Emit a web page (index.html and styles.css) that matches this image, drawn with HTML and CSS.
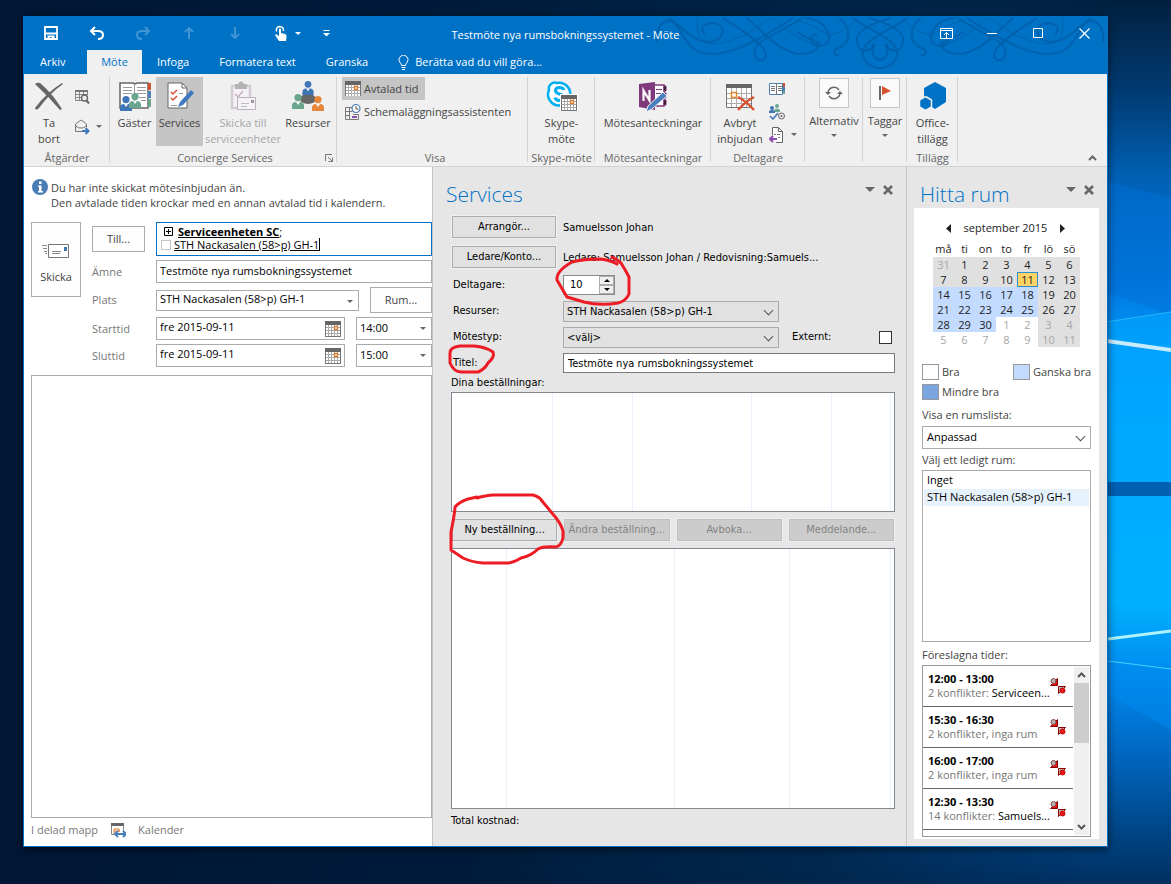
FILE: index.html
```html
<!DOCTYPE html>
<html lang="sv">
<head>
    <meta charset="UTF-8">
    <meta name="viewport" content="width=device-width, initial-scale=1.0">
    <title>Testmöte nya rumsbokningssystemet - Möte</title>
    <link rel="stylesheet" href="styles.css">
</head>
<body>
    <!-- shared icons -->
    <svg class="defs" width="0" height="0">
        <symbol id="icon-calendar" viewBox="0 0 16 16">
            <rect x="0.5" y="1.5" width="15" height="14" fill="#fff" stroke="#777"/>
            <rect y="0" width="16" height="4" fill="#666"/>
            <path d="M3.5 4v11M6.5 4v11M9.5 4v11M12.5 4v11M1 6.5h14M1 9.5h14M1 12.5h14" stroke="#aaa"/>
            <rect x="9.5" y="5.5" width="3" height="3" fill="#fff" stroke="#e07a2c" stroke-width="1.4"/>
        </symbol>
        <symbol id="icon-conflict" viewBox="0 0 16 16">
            <path d="M7.5.5v7h-7z" fill="#e81010" stroke="#800"/>
            <circle cx="3.500" cy="3" r="2.500" fill="#b4b4b4" stroke="#844"/>
            <path d="M8.500 8.500h7l-7 7z" fill="#bbb" stroke="#800"/>
            <circle cx="12.500" cy="12.500" r="2.500" fill="#f01818" stroke="#b00"/>
        </symbol>
        <symbol id="icon-person" viewBox="0 0 12 15">
            <circle cx="6" cy="3.6" r="3.6"/>
            <path d="M0 15v-3q0-4 4-4h4q4 0 4 4v3z"/>
            <path d="M4 8l2 3 2-3z" fill="#fff"/>
        </symbol>
    </svg>

    <svg class="wallpaper" viewBox="0 0 1171 884" preserveAspectRatio="none">
        <defs>
            <linearGradient id="sky" x1="0" y1="0" x2="0" y2="1">
                <stop offset="0" stop-color="#01203f"/>
                <stop offset="0.1" stop-color="#013a70"/>
                <stop offset="0.2" stop-color="#0060b4"/>
                <stop offset="0.32" stop-color="#0078e0"/>
                <stop offset="0.4" stop-color="#009bff"/>
                <stop offset="0.5" stop-color="#00a8ff"/>
                <stop offset="0.68" stop-color="#00b0ff"/>
                <stop offset="0.77" stop-color="#0088ee"/>
                <stop offset="0.86" stop-color="#0064bd"/>
                <stop offset="0.95" stop-color="#00427f"/>
                <stop offset="1" stop-color="#002f60"/>
            </linearGradient>
            <linearGradient id="shade" x1="0" y1="0" x2="1" y2="0">
                <stop offset="0" stop-color="#001735"/>
                <stop offset="0.4" stop-color="#001b3a"/>
                <stop offset="0.7" stop-color="#002347" stop-opacity="0.8"/>
                <stop offset="0.94" stop-color="#002a55" stop-opacity="0"/>
            </linearGradient>
        </defs>
        <rect width="1171" height="884" fill="url(#sky)"/>
        <path d="M1100 180L1171 198V315L1100 290z" fill="#006fd6" opacity="0.5"/>
        <path d="M1100 322L1171 312V482H1100z" fill="#00aaff" opacity="0.5"/>
        <rect x="1100" y="482" width="71" height="14" fill="#0060b2"/>
        <path d="M1100 340L1171 350" stroke="#c8ecff" stroke-width="4"/>
        <path d="M1100 640L1171 631" stroke="#aef2ff" stroke-width="3"/>
        <path d="M1100 323L1171 312" stroke="#28b6f8"/>
        <path d="M1100 660L1171 669" stroke="#46cffb"/>
        <path d="M1100 662L1171 672V730L1100 690z" fill="#008aee" opacity="0.5"/>
        <rect width="1171" height="884" fill="url(#shade)"/>
    </svg>

    <div class="window">
        <header class="titlebar">
            <svg class="ornament" width="450" height="58" viewBox="0 0 450 58">
                <g id="swirl" fill="none" stroke="#0062ad" stroke-width="2">
                    <path d="M2 26C0 10 10 2 18 6C28 12 30 40 60 38C84 36 110 20 138 2"/>
                    <path d="M14 2C30 14 40 27 56 26C70 24 72 8 58 7C48 7 44 14 50 18"/>
                    <path d="M42 2C42 22 46 28 60 28C84 26 104 10 116 2" stroke-width="1"/>
                    <path d="M68 2C86 14 100 22 106 30C118 42 105 48 101 42C96 34 104 26 112 22L148 2"/>
                    <path d="M92 2C108 16 126 37 145 38C156 38 164 34 164 27C160 24 150 22 142 16"/>
                    <path d="M118 2C134 18 152 28 166 28" stroke-width="1"/>
                    <path d="M150 2C162 2 176 12 174 24C172 30 162 32 157 27C154 20 160 16 162 20"/>
                    <path d="M142 5C160 8 166 18 178 18C190 16 196 8 204 2" stroke-width="1"/>
                    <path d="M184 2C196 10 196 26 186 31C176 34 178 42 184 38"/>
                    <path d="M236 2C214 8 200 16 202 26C204 36 210 36 218 32C222 26 216 28 217 32C218 42 222 44 225 44"/>
                    <path d="M198 2C216 16 240 22 242 36"/>
                    <path d="M208 36C207 46 216 52 225 52"/>
                </g>
                <use href="#swirl" transform="matrix(-1 0 0 1 450 0)"/>
            </svg>
            <div class="quick-access">
                <button aria-label="Spara"><svg width="14" height="14" viewBox="0 0 14 14"><path d="M1 1h12v12H1zM1 7.500h12" fill="none" stroke="#fff" stroke-width="1.800"/><path d="M3.500 13V9.500h7V13h-3v-2H6v2z" fill="#fff"/></svg></button>
                <button aria-label="Ångra"><svg width="16" height="14" viewBox="0 0 16 14"><path d="M6 1L2 5l4 4M2 5h7q5 0 5 4t-5 4" fill="none" stroke="#fff" stroke-width="2"/></svg></button>
                <button class="dim" aria-label="Gör om"><svg width="16" height="14" viewBox="0 0 16 14"><path d="M10 1l4 4-4 4M14 5H7Q2 5 2 9t5 4" fill="none" stroke="#fff" stroke-width="2"/></svg></button>
                <button class="dim" aria-label="Föregående"><svg width="10" height="12" viewBox="0 0 10 12"><path d="M5 12V1M1 5l4-4 4 4" fill="none" stroke="#fff" stroke-width="2"/></svg></button>
                <button class="dim" aria-label="Nästa"><svg width="10" height="12" viewBox="0 0 10 12"><path d="M5 0v11M1 7l4 4 4-4" fill="none" stroke="#fff" stroke-width="2"/></svg></button>
                <button aria-label="Pekläge"><svg width="12" height="16" viewBox="0 0 12 16"><path d="M1.600 6.500A3.600 3.600 0 1 1 8.400 6" fill="none" stroke="#fff" stroke-width="1.500"/><path d="M4 4q1-1.500 2 0v4l4 1q2 .5 1.500 3L11 16H4L0 10q1-1.500 3 .5l1 1z" fill="#fff"/></svg></button>
                <span class="arrow light"></span>
                <button class="customize" aria-label="Anpassa verktygsfältet"><svg width="7" height="7" viewBox="0 0 7 7"><path d="M0.500 0.500h6" stroke="#fff"/><path d="M0 3h7L3.500 6.500z" fill="#fff"/></svg></button>
            </div>
            <h1>Testmöte nya rumsbokningssystemet - Möte</h1>
            <div class="window-controls">
                <button aria-label="Menyfliksalternativ"><svg width="13" height="11" viewBox="0 0 13 11"><path d="M.5.5h12v10H.5zM.5 2.500h12M6.500 10V4.500M4 7l2.500-2.500L9 7" fill="none" stroke="#fff"/></svg></button>
                <button aria-label="Minimera"><svg width="10" height="11" viewBox="0 0 10 11"><path d="M0 5.500h10" stroke="#fff"/></svg></button>
                <button aria-label="Maximera"><svg width="10" height="10" viewBox="0 0 10 10"><path d="M.5.5h9v9h-9z" fill="none" stroke="#fff"/></svg></button>
                <button aria-label="Stäng"><svg width="11" height="11" viewBox="0 0 11 11"><path d="M.5.5l10 10M10.500.5l-10 10" stroke="#fff" stroke-width="1.200"/></svg></button>
            </div>
        </header>

        <nav class="tabs">
            <button class="tab file">Arkiv</button>
            <button class="tab active">Möte</button>
            <button class="tab">Infoga</button>
            <button class="tab">Formatera text</button>
            <button class="tab">Granska</button>
            <button class="tab tell-me">
                <svg width="11" height="15" viewBox="0 0 11 15"><path d="M3.500 10.500Q3.500 9 2 7.500A4.500 4.500 0 1 1 9 7.500Q7.500 9 7.500 10.500zM3.500 12.500h4M4 14.500h3" fill="none" stroke="#fff"/></svg>
                Berätta vad du vill göra...
            </button>
        </nav>

        <div class="ribbon">
            <section class="group actions">
                <div class="group-body">
                    <button class="big">
                        <svg width="30" height="30" viewBox="0 0 30 30"><path d="M1 3Q3 1 6 2Q18 12 28 28L26 29Q14 15 1 3zM28 2L29 3Q16 12 5 27Q2 30 1 27Q12 12 28 2z" fill="#666"/></svg>
                        <span>Ta<br>bort</span>
                    </button>
                    <div class="small-icons wide">
                        <button aria-label="Kalender"><svg width="16" height="16" viewBox="0 0 16 16"><path d="M8 11.500H1.500v-10h12V6M1 5.500h12M5.500 3v9M9.500 3v3M1 8.500h7" fill="none" stroke="#888"/><path d="M1 1h13v2H1z" fill="#777"/><circle cx="10.500" cy="9" r="3" fill="#f0f0f0" stroke="#666" stroke-width="1.300"/><path d="M12.500 11.500L15 14.500" stroke="#666" stroke-width="2"/></svg></button>
                        <button aria-label="Vidarebefordra"><svg width="16" height="16" viewBox="0 0 16 16"><path d="M8 12.500H1.500V5L7 1l5.500 4v3M1.500 5q0 4 5.500 4t5.500-4" fill="none" stroke="#777"/><path d="M8 12h6M11.500 9l3 3-3 3" fill="none" stroke="#3c78b8" stroke-width="2"/></svg><span class="arrow"></span></button>
                    </div>
                </div>
                <h2>Åtgärder</h2>
            </section>

            <section class="group concierge">
                <div class="group-body">
                    <button class="big guests">
                        <svg width="32" height="30" viewBox="0 0 32 30"><path d="M1 2h13l2 1 2-1h11v25H1z" fill="#fff" stroke="#666" stroke-width="1.500"/><path d="M15.500 3v24M4 6.500h9M4 9.500h9M4 12.500h9M18 6.500h9M18 9.500h9M18 12.500h9M20 16.500h7M22 19.500h5" stroke="#999"/><path d="M29 2h3v7h-3z" fill="#d35230"/><path d="M29 10h3v7h-3z" fill="#4a7fb8"/><path d="M29 18h3v8h-3z" fill="#6aa58e"/><use href="#icon-person" x="1" y="15" width="12" height="15" fill="#3f75b5"/><use href="#icon-person" x="10" y="12" width="12" height="15" fill="#6aa58e"/></svg>
                        <span>Gäster</span>
                    </button>
                    <button class="big services selected">
                        <svg width="28" height="30" viewBox="0 0 28 30"><path d="M2 2h14l5 5v20H2z" fill="#fff" stroke="#666"/><path d="M16 2v5h5" fill="none" stroke="#666"/><path d="M5 11l2 2 4-4M5 17l2 2 4-4" fill="none" stroke="#d35230" stroke-width="1.500"/><path d="M5 24.500h6M13 12.500h4" stroke="#999"/><path d="M12 26l2-5L25 9l3 3L17 24z" fill="#3f7ac0"/></svg>
                        <span>Services</span>
                    </button>
                    <button class="big send" disabled>
                        <svg width="28" height="30" viewBox="0 0 28 30"><path d="M3 5h18v22H3z" fill="#f4f0f5" stroke="#d3ccd6" stroke-width="2.500"/><path d="M6 3h12v5H6z" fill="#b4b4b4"/><circle cx="12" cy="3" r="2.500" fill="#b4b4b4"/><path d="M6 13l3 3 5-6" fill="none" stroke="#c9b0c4" stroke-width="1.500"/><path d="M8.500 16.500h18v12h-18z" fill="#f6f3f7" stroke="#b9b2bc"/><path d="M12 22.500h8M12 25.500h6" stroke="#bbb"/><path d="M22 19h3v3h-3z" fill="#999"/></svg>
                        <span>Skicka till<br>serviceenheter</span>
                    </button>
                    <button class="big">
                        <svg width="32" height="30" viewBox="0 0 32 30"><ellipse cx="16" cy="18" rx="8" ry="5" fill="#666"/><use href="#icon-person" x="10" y="0" width="12" height="14" fill="#3f75b5"/><use href="#icon-person" x="0" y="13" width="12" height="15" fill="#6aa58e"/><use href="#icon-person" x="20" y="15" width="12" height="15" fill="#e5863a"/></svg>
                        <span>Resurser</span>
                    </button>
                </div>
                <h2>Concierge Services</h2>
                <svg class="launcher" width="8" height="8" viewBox="0 0 8 8"><path d="M.5 7V.5H7M3 3l4 4M7.500 3.500v4h-4" fill="none" stroke="#777"/></svg>
            </section>

            <section class="group show">
                <div class="group-body column">
                    <button class="row-button selected"><svg width="16" height="15"><use href="#icon-calendar" width="16" height="16"/></svg>Avtalad tid</button>
                    <button class="row-button"><svg width="16" height="16" viewBox="0 0 16 16"><path d="M.5 3.500h7M.5 3.500v12h4v-12M4.500 7.500h3M.5 7.500h4M.5 11.500h4M8 10.500h5.500v5H5" fill="none" stroke="#777"/><path d="M7 12h5v2H7z" fill="#8a52ad"/><circle cx="11" cy="4.500" r="4" fill="#fff" stroke="#4a7fb8" stroke-width="1.200"/><path d="M11 2v3h2.500" fill="none" stroke="#555"/></svg>Schemaläggningsassistenten</button>
                </div>
                <h2>Visa</h2>
            </section>

            <section class="group skype">
                <div class="group-body">
                    <button class="big">
                        <svg width="32" height="30" viewBox="0 0 32 30"><path d="M3 9A6 6 0 0 1 11 2A11 11 0 0 1 24 15A6 6 0 0 1 16 24A11 11 0 0 1 3 9z" fill="#fff" stroke="#00aff0" stroke-width="2.500"/><path d="M18 9Q17 6.500 13.500 6.500Q9.500 6.500 9.500 9.500Q9.500 12 13.500 13Q18 14 18 16.500Q17.500 19.500 13.500 19.500Q9.500 19.500 9 16.500" fill="none" stroke="#00aff0" stroke-width="3"/><path d="M14 13h18v17H14z" fill="#fff"/><use href="#icon-calendar" x="15" y="14" width="16" height="16"/></svg>
                        <span>Skype-<br>möte</span>
                    </button>
                </div>
                <h2>Skype-möte</h2>
            </section>

            <section class="group notes">
                <div class="group-body">
                    <button class="big">
                        <svg width="30" height="30" viewBox="0 0 30 30"><path d="M16 4h10v21H16z" fill="#fff" stroke="#80397b" stroke-width="1.500"/><path d="M18 8.500h6M18 12.500h6M26 5h2v5h-2zM26 12h2v5h-2zM26 19h2v5h-2z" stroke="#80397b"/><path d="M1 3l16-2v28L1 26z" fill="#80397b"/><path d="M5.500 20V9.500l6 10V9" fill="none" stroke="#fff" stroke-width="2.200"/><path d="M8 31l2-6L25 11l4 4L14 28z" fill="#4a80bd" stroke="#f0f0f0"/></svg>
                        <span>Mötesanteckningar</span>
                    </button>
                </div>
                <h2>Mötesanteckningar</h2>
            </section>

            <section class="group attendees">
                <div class="group-body">
                    <button class="big">
                        <svg width="30" height="30" viewBox="0 0 30 30"><path d="M1.500 3.500h25v23h-25z" fill="#fff" stroke="#777"/><path d="M6.500 7v19M11.500 7v19M16.500 7v19M21.500 7v19M2 12.500h24M2 17.500h24M2 22.500h24" stroke="#aaa"/><path d="M1 3h26v4H1z" fill="#666"/><path d="M6.500 11.500h5v5h-5z" fill="#fff" stroke="#e8862e" stroke-width="1.500"/><path d="M13 16q8 4 16 13M29 16q-9 5-16 13" fill="none" stroke="#d8512f" stroke-width="2.500"/></svg>
                        <span>Avbryt<br>inbjudan</span>
                    </button>
                    <div class="small-icons">
                        <button aria-label="Adressbok"><svg width="16" height="14" viewBox="0 0 16 14"><path d="M.5 1.500h13v11H.5z" fill="#fff" stroke="#4a7fb8"/><path d="M7.500 1v12M2 4.500h4M2 6.500h4M2 8.500h4M9 4.500h4M9 6.500h4M9 8.500h4" stroke="#777"/><path d="M14 1h2v4h-2z" fill="#d35230"/><path d="M14 5h2v4h-2z" fill="#4a7fb8"/><path d="M14 9h2v3h-2z" fill="#6aa58e"/></svg></button>
                        <button aria-label="Kontrollera namn"><svg width="16" height="16" viewBox="0 0 16 16"><circle cx="8" cy="2" r="2" fill="#6aa58e"/><path d="M5 8V6q3-3 6 0v2z" fill="#6aa58e"/><circle cx="3" cy="4" r="2" fill="#3f75b5"/><path d="M0 9V7q3-2 6 0v2z" fill="#3f75b5"/><path d="M1 12l3 3 5-6" fill="none" stroke="#3f75b5" stroke-width="1.500"/><circle cx="12.500" cy="12" r="3" fill="none" stroke="#666"/><circle cx="12.500" cy="12" r="1" fill="#666"/></svg></button>
                        <button aria-label="Svarsalternativ"><svg width="16" height="16" viewBox="0 0 16 16"><path d="M3.500 8V.5h6l4 4v11H7M9.500.5v4h4" fill="#fff" stroke="#666"/><path d="M5 7.500h2M8 7.500h3M9 10.500h2" stroke="#777"/><path d="M8 12H1M4 9l-3 3 3 3" fill="none" stroke="#8a4fb0" stroke-width="2"/></svg><span class="arrow"></span></button>
                    </div>
                </div>
                <h2>Deltagare</h2>
            </section>

            <section class="group options">
                <div class="group-body">
                    <button class="boxed">
                        <span class="frame"><svg width="18" height="16" viewBox="0 0 18 16"><path d="M3 8a6 6 0 0 1 11-3M15 8a6 6 0 0 1-11 3" fill="none" stroke="#666" stroke-width="1.500"/><path d="M0 7h6L3 10zM12 9h6l-3-3z" fill="#666"/></svg></span>
                        <span>Alternativ</span>
                        <span class="arrow"></span>
                    </button>
                </div>
            </section>

            <section class="group tags">
                <div class="group-body">
                    <button class="boxed">
                        <span class="frame"><svg width="14" height="16" viewBox="0 0 14 16"><path d="M2 1v14" stroke="#666" stroke-width="2"/><path d="M4 1l9 5-9 4z" fill="#d8512f"/></svg></span>
                        <span>Taggar</span>
                        <span class="arrow"></span>
                    </button>
                </div>
            </section>

            <section class="group addins">
                <div class="group-body">
                    <button class="big">
                        <svg width="28" height="30" viewBox="0 0 28 30"><path d="M16 1l11 6v14l-11 7-11-7V7z" fill="#0072c6"/><path d="M6.500 15.500l6 3.500v7l-6 3.500-6-3.500v-7z" fill="#0072c6" stroke="#f0f0f0" stroke-width="1.500"/></svg>
                        <span>Office-<br>tillägg</span>
                    </button>
                </div>
                <h2>Tillägg</h2>
            </section>

            <button class="collapse" aria-label="Dölj menyfliksområdet"><svg width="9" height="6" viewBox="0 0 9 6"><path d="M1 5l3.500-3.500L8 5" fill="none" stroke="#666" stroke-width="2"/></svg></button>
        </div>

        <div class="panes">
            <main class="meeting">
                <div class="info">
                    <svg width="16" height="16" viewBox="0 0 16 16"><circle cx="8" cy="8" r="8" fill="#4a7db5"/><path d="M7 2.500h2.500V5H7zM6 6.500h3.500V12H11v1.500H6V12h1V8H6z" fill="#fff"/></svg>
                    <p>Du har inte skickat mötesinbjudan än.<br>Den avtalade tiden krockar med en annan avtalad tid i kalendern.</p>
                </div>

                <form class="meeting-form">
                    <button type="button" class="send-button">
                        <svg width="28" height="16" viewBox="0 0 28 16"><path d="M6.500 1.500h20v13h-20z" fill="#fff" stroke="#777"/><path d="M22 4h3v4h-3z" fill="#3f75b5"/><path d="M10 8.500h9M10 10.500h8M0 2.500h5M1 5.500h4M2 8.500h3M3 10.500h2" stroke="#888"/></svg>
                        Skicka
                    </button>
                    <button type="button" class="to-button">Till...</button>
                    <div class="to-field" role="textbox" aria-label="Till">
                        <div><svg width="9" height="9" viewBox="0 0 9 9"><path d="M.5.5h8v8h-8zM2 4.500h5M4.500 2v5" fill="none" stroke="#000"/></svg><b>Serviceenheten SC</b>;</div>
                        <div class="second"><i></i><u>STH Nackasalen (58&gt;p) GH-1</u></div>
                    </div>

                    <label for="subject">Ämne</label>
                    <input id="subject" type="text" value="Testmöte nya rumsbokningssystemet">

                    <label for="place">Plats</label>
                    <div class="split">
                        <div class="select place"><select id="place"><option>STH Nackasalen (58&gt;p) GH-1</option></select></div>
                        <button type="button" class="room-button">Rum...</button>
                    </div>

                    <label for="start">Starttid</label>
                    <div class="split">
                        <div class="date"><input id="start" type="text" value="fre 2015-09-11"><svg width="16" height="16"><use href="#icon-calendar" width="16" height="16"/></svg></div>
                        <div class="select time"><select aria-label="Startklockslag"><option>14:00</option></select></div>
                    </div>

                    <label for="end">Sluttid</label>
                    <div class="split">
                        <div class="date"><input id="end" type="text" value="fre 2015-09-11"><svg width="16" height="16"><use href="#icon-calendar" width="16" height="16"/></svg></div>
                        <div class="select time"><select aria-label="Slutklockslag"><option>15:00</option></select></div>
                    </div>
                </form>

                <textarea class="message" aria-label="Meddelande"></textarea>

                <footer>
                    <span>I delad mapp</span>
                    <svg width="16" height="16" viewBox="0 0 16 16"><path d="M1.500 2.500h12v10h-12z" fill="#fff" stroke="#888"/><path d="M1 1h13v3H1z" fill="#666"/><path d="M4 12V7h5v3M4 9h6" fill="none" stroke="#e07a2c"/><path d="M5 12h11M8 9l-3 3 3 3M13 9l3 3-3 3" fill="none" stroke="#4a80bd" stroke-width="2"/></svg>
                    <span>Kalender</span>
                </footer>
            </main>

            <section class="services-pane">
                <div class="pane-head">
                    <h2>Services</h2>
                    <button aria-label="Alternativ"><span class="arrow large"></span></button>
                    <button aria-label="Stäng"><svg width="10" height="10" viewBox="0 0 10 10"><path d="M1 1l8 8M9 1L1 9" stroke="#666" stroke-width="2.500"/></svg></button>
                </div>

                <form class="services-form">
                    <button type="button" class="win-button">Arrangör...</button>
                    <span>Samuelsson Johan</span>
                    <button type="button" class="win-button">Ledare/Konto...</button>
                    <span>Ledare: Samuelsson Johan / Redovisning:Samuels...</span>
                    <label for="attendees">Deltagare:</label>
                    <div class="spinner">
                        <input id="attendees" type="text" value="10">
                        <button type="button" aria-label="Öka"><i class="arrow up"></i></button>
                        <button type="button" aria-label="Minska"><i class="arrow down"></i></button>
                    </div>
                    <label for="resource">Resurser:</label>
                    <div class="select gray"><select id="resource"><option>STH Nackasalen (58&gt;p) GH-1</option></select></div>
                    <label for="type">Mötestyp:</label>
                    <div class="type-row">
                        <div class="select gray"><select id="type"><option>&lt;välj&gt;</option></select></div>
                        <label for="external">Externt:</label>
                        <input id="external" type="checkbox">
                    </div>
                    <label for="title">Titel:</label>
                    <input id="title" class="title-input" type="text" value="Testmöte nya rumsbokningssystemet">
                </form>

                <p class="list-label">Dina beställningar:</p>
                <div class="columns orders"><i></i><i></i><i></i><i></i><i></i></div>
                <div class="order-buttons">
                    <button class="win-button">Ny beställning...</button>
                    <button class="win-button" disabled>Ändra beställning...</button>
                    <button class="win-button" disabled>Avboka...</button>
                    <button class="win-button" disabled>Meddelande...</button>
                </div>
                <div class="columns details"><i></i><i></i><i></i><i></i></div>
                <p class="total">Total kostnad:</p>

                <svg class="marks" width="474" height="420" viewBox="0 0 474 420">
                    <path d="M179 90L184 93L188 96Q193 104 196 110V127Q193 134 185 136Q167 139 151 135L134 130Q128 120 124 113Q123 104 139 95Q150 92 168 92Q180 94 184 97"/>
                    <path d="M41 179H27Q17 180 17 186V196Q21 205 28 205H45Q52 202 55 196Q62 190 60 185Q53 180 41 179"/>
                    <path d="M44 331Q50 329 60 328H100Q107 330 109 334L119 346Q128 356 130 364V371Q128 379 123 380Q110 379 105 382Q98 389 88 391Q80 396 74 396H50Q38 395 30 391L18 383V365Q22 345 22 340Q26 335 35 332L44 330"/>
                </svg>
            </section>

            <aside class="room-pane">
                <div class="pane-head">
                    <h2>Hitta rum</h2>
                    <button aria-label="Alternativ"><span class="arrow large"></span></button>
                    <button aria-label="Stäng"><svg width="10" height="10" viewBox="0 0 10 10"><path d="M1 1l8 8M9 1L1 9" stroke="#666" stroke-width="2.500"/></svg></button>
                </div>

                <div class="room-box">
                    <div class="month">
                        <button aria-label="Föregående månad"><svg width="5" height="9" viewBox="0 0 5 9"><path d="M5 0v9L0 4.500z" fill="#222"/></svg></button>
                        <span>september 2015</span>
                        <button aria-label="Nästa månad"><svg width="5" height="9" viewBox="0 0 5 9"><path d="M0 0v9l5-4.500z" fill="#222"/></svg></button>
                    </div>
                    <table class="calendar">
                        <thead>
                            <tr><th>må</th><th>ti</th><th>on</th><th>to</th><th>fr</th><th>lö</th><th>sö</th></tr>
                        </thead>
                        <tbody>
                            <tr><td class="past other">31</td><td class="past">1</td><td class="past">2</td><td class="past">3</td><td class="past">4</td><td class="past">5</td><td class="past">6</td></tr>
                            <tr><td class="past">7</td><td class="past">8</td><td class="past">9</td><td class="past">10</td><td class="today">11</td><td class="past">12</td><td class="past">13</td></tr>
                            <tr><td class="fair">14</td><td class="fair">15</td><td class="fair">16</td><td class="fair">17</td><td class="fair">18</td><td class="past">19</td><td class="past">20</td></tr>
                            <tr><td class="fair">21</td><td class="fair">22</td><td class="fair">23</td><td class="fair">24</td><td class="fair">25</td><td class="past">26</td><td class="past">27</td></tr>
                            <tr><td class="fair">28</td><td class="fair">29</td><td class="fair">30</td><td class="other">1</td><td class="other">2</td><td class="past other">3</td><td class="past other">4</td></tr>
                            <tr><td class="other">5</td><td class="other">6</td><td class="other">7</td><td class="other">8</td><td class="other">9</td><td class="past other">10</td><td class="past other">11</td></tr>
                        </tbody>
                    </table>

                    <ul class="legend">
                        <li><i></i>Bra</li>
                        <li><i class="fair"></i>Ganska bra</li>
                        <li><i class="poor"></i>Mindre bra</li>
                    </ul>

                    <label for="roomlist">Visa en rumslista:</label>
                    <div class="select room-list"><select id="roomlist"><option>Anpassad</option></select></div>

                    <label for="rooms">Välj ett ledigt rum:</label>
                    <select id="rooms" class="rooms" size="8">
                        <option>Inget</option>
                        <option class="current">STH Nackasalen (58&gt;p) GH-1</option>
                    </select>

                    <span class="times-label">Föreslagna tider:</span>
                    <div class="times">
                        <ul>
                            <li><div><b>12:00 - 13:00</b><p>2 konflikter: <em>Serviceen...</em></p></div><svg width="16" height="16"><use href="#icon-conflict" width="16" height="16"/></svg></li>
                            <li><div><b>15:30 - 16:30</b><p>2 konflikter, inga rum</p></div><svg width="16" height="16"><use href="#icon-conflict" width="16" height="16"/></svg></li>
                            <li><div><b>16:00 - 17:00</b><p>2 konflikter, inga rum</p></div><svg width="16" height="16"><use href="#icon-conflict" width="16" height="16"/></svg></li>
                            <li><div><b>12:30 - 13:30</b><p>14 konflikter: <em>Samuels...</em></p></div><svg width="16" height="16"><use href="#icon-conflict" width="16" height="16"/></svg></li>
                        </ul>
                        <div class="scrollbar">
                            <svg width="9" height="6" viewBox="0 0 9 6"><path d="M1 5l3.500-3.500L8 5" fill="none" stroke="#555" stroke-width="2"/></svg>
                            <i></i>
                            <svg width="9" height="6" viewBox="0 0 9 6"><path d="M1 1l3.500 3.500L8 1" fill="none" stroke="#555" stroke-width="2"/></svg>
                        </div>
                    </div>
                </div>
            </aside>
        </div>
    </div>
</body>
</html>
```
FILE: styles.css
```css
* {
    box-sizing: border-box;
}
body {
    display: flex;
    min-height: 100vh;
    margin: 0;
    padding: 16px 63px 37px 23px;
    background: #001735;
    color: #444;
    font-family: "Open Sans", "Noto Sans", sans-serif;
    font-size: 11px;
    line-height: 16px;
}
h1, h2, p, ul {
    margin: 0;
    padding: 0;
    font-size: 11px;
    font-weight: normal;
}
ul {
    list-style: none;
}
button, input, select, textarea {
    margin: 0;
    padding: 0;
    border: none;
    border-radius: 0;
    background: none;
    color: inherit;
    font: inherit;
    outline: none;
}
select {
    appearance: none;
}
svg {
    display: block;
    flex: none;
}
.defs {
    position: absolute;
}
.wallpaper {
    position: absolute;
    top: 0;
    left: 0;
    width: 100%;
    height: 100%;
}
.window {
    position: relative;
    display: flex;
    flex: 1;
    flex-direction: column;
    min-width: 0;
    border: 1px solid #0072c6;
    border-top: none;
    background: #fff;
    box-shadow: 0 2px 8px rgba(0, 0, 0, 0.6);
}

/* small triangle used by all drop-downs */
.arrow {
    display: block;
    width: 0;
    height: 0;
    border: 3px solid transparent;
    border-top-color: #666;
    border-bottom: none;
}
.arrow.light {
    border-top-color: #fff;
}
.arrow.large {
    border-width: 5px 5px 0;
}

/* title bar */
.titlebar {
    display: grid;
    grid-template-columns: 1fr auto 1fr;
    align-items: center;
    height: 34px;
    background: #0072c6;
    color: #fff;
}
.ornament {
    position: absolute;
    top: 0;
    right: 2px;
}
.titlebar h1 {
    position: relative;
    padding-top: 3px;
}
.quick-access, .window-controls {
    position: relative;
    display: flex;
    align-items: center;
}
.quick-access {
    padding-left: 4px;
}
.window-controls {
    justify-content: flex-end;
}
.titlebar button {
    display: flex;
    align-items: center;
    justify-content: center;
    width: 46px;
    height: 32px;
}
.titlebar .dim {
    opacity: 0.25;
}
.quick-access .arrow {
    margin-left: -9px;
}
.quick-access .customize {
    width: 50px;
}

/* tabs */
.tabs {
    display: flex;
    height: 24px;
    background: #0072c6;
    color: #fff;
}
.tabs .tab {
    position: relative;
    display: flex;
    align-items: center;
    padding: 0 15px;
}
.tabs .file {
    width: 63px;
    padding-left: 16px;
}
.tabs .active {
    justify-content: center;
    width: 55px;
    background: #f0f0f0;
    color: #0072c6;
}
.tabs .tell-me {
    gap: 6px;
}

/* ribbon */
.ribbon {
    position: relative;
    display: flex;
    height: 93px;
    padding-top: 3px;
    border-bottom: 1px solid #d2d2d2;
    background: #f0f0f0;
}
.group {
    position: relative;
    display: flex;
    flex: none;
    flex-direction: column;
    background: linear-gradient(#d2d2d2, #d2d2d2) right top / 1px 85px no-repeat;
}
.group h2 {
    color: #666;
    text-align: center;
    white-space: nowrap;
}
.group-body {
    display: flex;
    height: 73px;
}
.group-body.column {
    flex-direction: column;
    align-items: flex-start;
}
.actions { width: 86px; }
.concierge { width: 227px; padding-left: 3px; }
.show { width: 191px; padding-left: 5px; }
.skype { width: 67px; }
.notes { width: 116px; }
.attendees { width: 94px; }
.options { width: 58px; }
.tags { width: 44px; }
.addins { width: 51px; }
.big {
    display: flex;
    flex: 1;
    flex-direction: column;
    align-items: center;
    gap: 4px;
    height: 69px;
    padding-top: 4px;
    white-space: nowrap;
}
.concierge .big {
    flex: none;
    width: 50px;
}
.concierge .guests {
    width: 43px;
}
.concierge .services {
    width: 47px;
}
.concierge .send {
    width: 80px;
    color: #a6a6a6;
}
.selected {
    background: #c5c5c5;
}
.small-icons {
    display: flex;
    flex-direction: column;
    width: 36px;
}
.small-icons button {
    display: flex;
    align-items: center;
    gap: 6px;
    height: 23px;
}
.small-icons.wide button {
    height: 30px;
    padding-top: 9px;
}
.launcher {
    position: absolute;
    right: 4px;
    bottom: 4px;
}
.row-button {
    display: flex;
    align-items: center;
    gap: 3px;
    height: 23px;
    padding: 0 7px 0 3px;
    white-space: nowrap;
}
.boxed {
    display: flex;
    flex: 1;
    flex-direction: column;
    align-items: center;
    gap: 5px;
    height: 69px;
    padding-top: 1px;
}
.frame {
    display: flex;
    align-items: center;
    justify-content: center;
    width: 30px;
    height: 30px;
    border: 1px solid #c6c6c6;
    background: #fafafa;
}
.collapse {
    position: absolute;
    right: 10px;
    bottom: 5px;
}

/* three columns under the ribbon */
.panes {
    display: grid;
    flex: 1;
    grid-template-columns: minmax(0, 409fr) minmax(0, 474fr) 200px;
}

/* meeting form */
.meeting {
    display: flex;
    flex-direction: column;
    padding: 12px 0 0 7px;
    border-right: 1px solid #c6c6c6;
}
.info {
    display: flex;
    gap: 3px;
    padding-left: 1px;
    line-height: 15px;
    white-space: nowrap;
}
.info p {
    padding-top: 1px;
}
.meeting-form {
    display: grid;
    grid-template-columns: 50px 53px minmax(0, 1fr);
    grid-template-rows: 34px 23px 26px 23px 23px;
    align-items: center;
    gap: 4px 11px;
    margin-top: 12px;
}
.meeting-form label {
    grid-column: 2;
    color: #777;
}
.meeting-form button {
    border: 1px solid #ababab;
    background: #fdfdfd;
}
.send-button {
    display: flex;
    grid-row: 1 / 4;
    align-self: start;
    flex-direction: column;
    align-items: center;
    justify-content: center;
    gap: 10px;
    height: 75px;
    padding-top: 8px;
}
.to-button, .room-button {
    height: 26px;
}
.to-field {
    height: 34px;
    padding: 2px 7px;
    border: 1px solid #0072c6;
    color: #000;
    line-height: 13px;
}
.to-field div {
    display: flex;
    align-items: center;
    gap: 5px;
}
.to-field .second {
    gap: 3px;
    margin-left: -3px;
}
.to-field b {
    margin-right: -5px;
    text-decoration: underline;
}
.to-field i {
    width: 10px;
    height: 10px;
    border: 1px solid #c6c6c6;
}
.to-field u {
    border-right: 1px solid #000;
}
#subject, .date, .select {
    border: 1px solid #ababab;
    background: #fff;
    color: #000;
}
#subject, .date {
    width: 100%;
    height: 23px;
    padding: 0 3px 3px;
}
.split {
    display: flex;
    align-items: center;
    gap: 11px;
}
.room-button {
    flex: none;
    width: 62px;
    border-right: none;
}
.date {
    display: flex;
    flex: 1;
    align-items: center;
    min-width: 0;
    padding-bottom: 0;
}
.date input {
    flex: 1;
    min-width: 0;
    padding-bottom: 3px;
}
.select {
    position: relative;
    flex: 1;
    min-width: 0;
    height: 23px;
}
.select select {
    width: 100%;
    height: 100%;
    padding: 0 3px 2px;
}
.select::after {
    position: absolute;
    top: 9px;
    right: 5px;
    border: 3px solid transparent;
    border-top-color: #666;
    border-bottom: none;
    content: "";
    pointer-events: none;
}
.select.place {
    height: 21px;
}
.select.time {
    flex: 0 0 76px;
}
.message {
    flex: 1;
    margin-top: 8px;
    border: 1px solid #ababab;
    resize: none;
}
.meeting footer {
    display: flex;
    align-items: center;
    gap: 12px;
    height: 28px;
    padding-bottom: 4px;
    color: #777;
}

/* task pane headings */
.pane-head {
    display: flex;
    align-items: center;
    gap: 8px;
    height: 45px;
    padding: 8px 2px 0 0;
}
.pane-head h2 {
    flex: 1;
    color: #0072c6;
    font-size: 21px;
    font-weight: 300;
    line-height: 28px;
}
.pane-head button {
    padding-bottom: 8px;
}

/* services pane */
.services-pane {
    position: relative;
    display: flex;
    flex-direction: column;
    padding: 0 11px 0 18px;
    border-right: 1px solid #c6c6c6;
    background: #e6e6e6;
    color: #000;
    font-family: "DejaVu Sans Condensed", "Noto Sans", sans-serif;
}
.services-pane .pane-head {
    margin-left: -5px;
    font-family: "Open Sans", "Noto Sans", sans-serif;
}
.services-form {
    display: grid;
    grid-template-columns: 106px minmax(0, 1fr);
    grid-template-rows: 30px 30px repeat(4, 26px);
    align-items: center;
    column-gap: 6px;
}
.services-form > label {
    padding-left: 2px;
}
.services-form > span {
    padding-top: 2px;
    white-space: nowrap;
}
.win-button {
    height: 22px;
    margin: 0 1px;
    border: 1px solid #adadad;
    background: #e1e1e1;
    outline: 1px solid #f0f0f0;
}
.win-button:disabled {
    border-color: #bfbfbf;
    background: #ccc;
    color: #838383;
}
.spinner {
    display: grid;
    grid-template-columns: 35px 15px;
    grid-template-rows: 9px 9px;
    width: 52px;
    height: 20px;
    border: 1px solid #8a8a8a;
    background: #fff;
}
.spinner input {
    grid-row: 1 / 3;
    width: 100%;
    padding-left: 6px;
}
.spinner button {
    display: flex;
    align-items: center;
    justify-content: center;
    border: 1px solid #adadad;
    background: #f0f0f0;
}
.spinner .arrow {
    border-top-color: #000;
}
.spinner .up {
    transform: rotate(180deg);
}
.select.gray {
    flex: none;
    width: 216px;
    height: 21px;
    background: #e1e1e1;
}
.select.gray::after, .select.room-list::after {
    top: 5px;
    right: 6px;
    width: 6px;
    height: 6px;
    border: solid #555;
    border-width: 0 1px 1px 0;
    transform: rotate(45deg);
}
.select.gray select {
    padding: 2px 3px 0;
}
.type-row {
    display: flex;
    align-items: center;
}
.type-row label {
    flex: 1;
    padding-left: 13px;
}
.type-row input {
    appearance: none;
    width: 13px;
    height: 13px;
    margin-right: 3px;
    border: 1px solid #333;
    background: #fff;
}
.title-input {
    height: 20px;
    padding: 0 4px;
    border: 1px solid #7a7a7a;
    background: #fff;
}
.columns {
    display: grid;
    border: 1px solid #828790;
    background: #fff;
}
.columns i {
    border-right: 1px solid #e8f1fb;
}
.orders {
    grid-template-columns: 101fr 80fr 120fr 80fr 59fr 3fr;
    height: 120px;
}
.details {
    flex: 1;
    grid-template-columns: 55fr 169fr 115fr 101fr 3fr;
}
.order-buttons {
    display: grid;
    grid-template-columns: repeat(4, 1fr);
    align-items: center;
    gap: 5px;
    height: 36px;
}
.total {
    height: 37px;
    line-height: 24px;
}
.list-label {
    height: 16px;
    line-height: 14px;
}

/* hand drawn rings, over the pane */
.marks {
    position: absolute;
    top: 0;
    left: 0;
    fill: none;
    stroke: #ed1c24;
    stroke-width: 3;
    stroke-linejoin: round;
    stroke-linecap: round;
    pointer-events: none;
}

/* room finder */
.room-pane {
    display: flex;
    flex-direction: column;
    padding: 0 8px 7px 7px;
    background: #e6e6e6;
}
.room-pane .pane-head {
    height: 41px;
    padding: 12px 5px 0 6px;
}
.room-box {
    display: flex;
    flex: 1;
    flex-direction: column;
    padding: 12px 8px 2px;
    background: #fff;
}
.month {
    display: flex;
    align-items: center;
    justify-content: space-between;
    width: 119px;
    margin-left: 24px;
    color: #222;
}
.calendar {
    width: 147px;
    margin: 4px 0 0 11px;
    border-collapse: collapse;
    color: #222;
    text-align: center;
    table-layout: fixed;
}
.calendar th {
    height: 17px;
    padding: 0;
    font-weight: normal;
}
.calendar td {
    height: 15px;
    padding: 0;
    line-height: 15px;
}
.calendar .past {
    background: #e0e0e0;
}
.fair {
    background: #c2dbff;
}
.calendar .other {
    color: #a6a6a6;
}
.calendar .today {
    background: #ffd464;
    box-shadow: inset 0 0 0 1px #2a8dd4;
}
.legend {
    display: grid;
    grid-template-columns: 91px auto;
    row-gap: 4px;
    margin: 17px -8px 7px 0;
}
.legend li {
    display: flex;
    align-items: center;
    gap: 3px;
}
.legend i {
    width: 17px;
    height: 16px;
    border: 1px solid #999;
}
.legend .poor {
    background: #7ba5e0;
}
.select.room-list {
    flex: none;
    margin: 3px 0;
}
.select.room-list select {
    padding-left: 4px;
}
.select.room-list::after {
    top: 6px;
}
.rooms {
    flex: 1 0 120px;
    margin: 2px 0 5px;
    padding: 1px;
    border: 1px solid #ababab;
    overflow: hidden;
    color: #000;
}
.rooms option {
    height: 17px;
    min-height: 17px;
    padding: 0 3px;
    line-height: 17px;
}
.rooms .current {
    background: #e5f1fb;
}
.times {
    display: flex;
    height: 172px;
    margin-top: 2px;
    border: 1px solid #999;
}
.times ul {
    flex: 1;
    min-width: 0;
}
.times li {
    display: flex;
    align-items: center;
    height: 41px;
    padding-left: 5px;
    border-bottom: 1px solid #666;
}
.times li div {
    flex: 1;
    min-width: 0;
    line-height: 14px;
    white-space: nowrap;
}
.times li svg {
    margin-right: 7px;
}
.times b {
    display: block;
}
.times p {
    color: #777;
}
.times b, .times em {
    color: #000;
    font-style: normal;
}
.scrollbar {
    display: flex;
    flex-direction: column;
    align-items: center;
    width: 15px;
    margin: 1px;
    padding: 5px 0;
    background: #f0f0f0;
}
.scrollbar i {
    width: 15px;
    height: 60px;
    margin: 5px 0 auto;
    background: #cdcdcd;
}
```
